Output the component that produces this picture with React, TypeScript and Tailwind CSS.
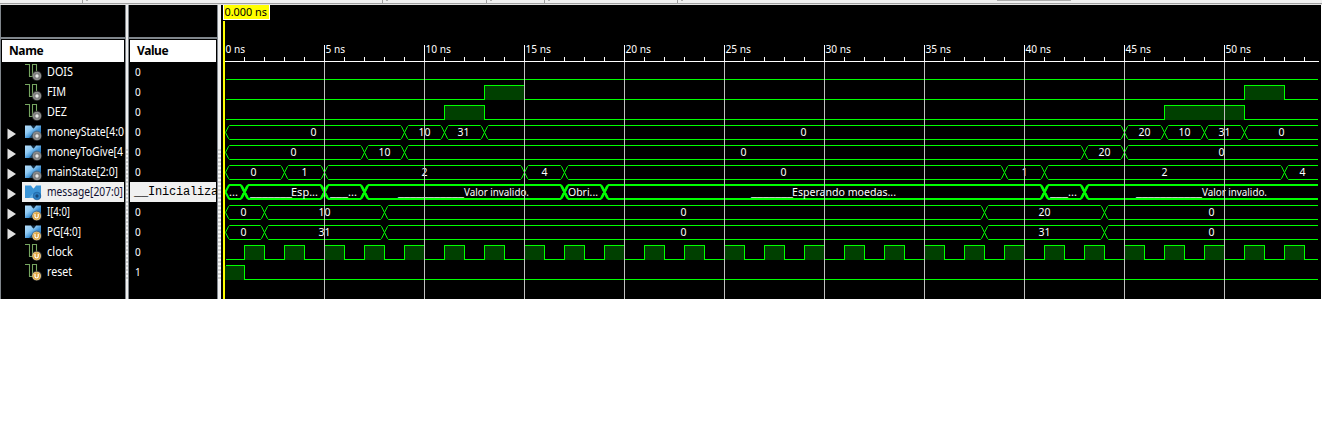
import React from "react";

const END = 1093.5;
const UI = '"Noto Sans", sans-serif';

type Kind = "bit" | "bus";
type Badge = "plus" | "unit";
interface Signal {
  name: string;
  value: string;
  kind: Kind;
  badge: Badge;
  selected?: boolean;
  nameWidth: number;
}

const signals: Signal[] = [
  { name: "DOIS", value: "0", kind: "bit", badge: "plus", nameWidth: 26 },
  { name: "FIM", value: "0", kind: "bit", badge: "plus", nameWidth: 19 },
  { name: "DEZ", value: "0", kind: "bit", badge: "plus", nameWidth: 20 },
  { name: "moneyState[4:0", value: "0", kind: "bus", badge: "plus", nameWidth: 77 },
  { name: "moneyToGive[4", value: "0", kind: "bus", badge: "plus", nameWidth: 76 },
  { name: "mainState[2:0]", value: "0", kind: "bus", badge: "plus", nameWidth: 71 },
  { name: "message[207:0]", value: "__Inicializa", kind: "bus", badge: "plus", selected: true, nameWidth: 76 },
  { name: "I[4:0]", value: "0", kind: "bus", badge: "unit", nameWidth: 23 },
  { name: "PG[4:0]", value: "0", kind: "bus", badge: "unit", nameWidth: 34 },
  { name: "clock", value: "0", kind: "bit", badge: "unit", nameWidth: 26 },
  { name: "reset", value: "1", kind: "bit", badge: "unit", nameWidth: 25 },
];

function IconDefs() {
  return (
    <defs>
      <linearGradient id="busFill" x1="0" y1="0" x2="1" y2="1">
        <stop offset="0" stopColor="#b4dcf8" />
        <stop offset="0.35" stopColor="#8fcaf4" />
        <stop offset="0.6" stopColor="#3a8fd4" />
        <stop offset="1" stopColor="#1c65ac" />
      </linearGradient>
      <radialGradient id="plusFill">
        <stop offset="0" stopColor="#9a9a9a" />
        <stop offset="0.7" stopColor="#808080" />
        <stop offset="1" stopColor="#5a5a5a" />
      </radialGradient>
      <radialGradient id="halo">
        <stop offset="0.6" stopColor="#6a6a6a" />
        <stop offset="1" stopColor="#3a3a3a" stopOpacity="0" />
      </radialGradient>
    </defs>
  );
}

function SignalIcon({ kind, badge, selected }: { kind: Kind; badge: Badge; selected?: boolean }) {
  return (
    <svg width="18" height="18" viewBox="0 0 18 18" className="block shrink-0">
      <IconDefs />
      {kind === "bit" ? (
        <path d="M1 1.5H5.5V13.5H8.5V1.5H12.5V8" fill="none" stroke="#76a560" strokeWidth="1.1" />
      ) : (
        <>
          <path d="M1 2.5H7L9.5 5.5L12 2.5H17V15H1Z" fill={selected ? "#3b94d6" : "url(#busFill)"} />
          <path d="M1 15H5L9 10.5L11 15Z" fill={selected ? "#6db3e6" : "#16344f"} opacity="0.7" />
          <path d="M7 2.5L9.5 5.5L12 2.5Z" fill={selected ? "#f0f0f0" : "#10283c"} />
        </>
      )}
      {!selected && <circle cx="12.8" cy="12.8" r="5.8" fill="url(#halo)" />}
      {badge === "plus" ? (
        <>
          <circle
            cx="13"
            cy="13"
            r="3.8"
            fill={selected ? "#2d7fc2" : "url(#plusFill)"}
            stroke={selected ? "#1c609d" : "#aaa"}
            strokeWidth="0.7"
          />
          <path d="M11.3 13H14.7M13 11.3V14.7" stroke={selected ? "#103a66" : "#fff"} strokeWidth="1.1" />
        </>
      ) : (
        <>
          <circle cx="12.6" cy="13" r="4" fill="#dfa23a" stroke="#f2d698" strokeWidth="0.7" />
          <path d="M11 10.8V13.6Q11 15 12.6 15Q14.2 15 14.2 13.6V10.8" fill="none" stroke="#fff" strokeWidth="1.2" />
        </>
      )}
    </svg>
  );
}

function NameRow({ s }: { s: Signal }) {
  return (
    <div className="flex h-5 items-center">
      <div className="flex h-5 w-[20px] shrink-0 items-center pl-[5px]">
        {s.kind === "bus" && (
          <svg width="11" height="12" viewBox="0 0 11 12" className="mt-[3px]">
            <path d="M0.5 0.5L9 6L0.5 11.5Z" fill="#e0e0e0" />
          </svg>
        )}
      </div>
      <div
        className={
          s.selected
            ? "flex h-5 grow items-center bg-[#f0f0f0] pl-[2px] text-[#101030]"
            : "flex h-5 grow items-center pl-[2px] text-white"
        }
      >
        <SignalIcon kind={s.kind} badge={s.badge} selected={s.selected} />
        <svg width="79" height="20" className="ml-[3px] block shrink-0">
          <text x="2" y="14" fontSize="12" fontFamily={UI} fill="currentColor" textLength={s.nameWidth} lengthAdjust="spacingAndGlyphs">
            {s.name}
          </text>
        </svg>
      </div>
    </div>
  );
}

function ValueRow({ s }: { s: Signal }) {
  return s.selected ? (
    <div className="h-5 overflow-hidden bg-[#f0f0f0] pl-1 font-['Liberation_Mono',monospace] text-[12px] leading-[21px] tracking-[-0.2px] whitespace-pre text-black">
      {s.value}
    </div>
  ) : (
    <div className="h-5 pl-[5px] font-['Noto_Sans',sans-serif] text-[10px] leading-[21px] text-white">{s.value}</div>
  );
}

function Column({ title, className, children }: { title: string; className: string; children: React.ReactNode }) {
  return (
    <div className={"flex shrink-0 flex-col overflow-hidden border-x border-[#80868c] bg-black " + className}>
      <div className="h-[32px] shrink-0 bg-black" />
      <div className="h-[2px] shrink-0 bg-[#80868c]" />
      <div className="mx-[1px] mt-[1px] flex h-[22px] shrink-0 items-center bg-white pl-[7px] font-['Noto_Sans',sans-serif] text-[12px] font-bold tracking-[-0.4px] text-black">
        {title}
      </div>
      <div className="mx-[1px] flex flex-col">{children}</div>
    </div>
  );
}

function Splitter({ className }: { className: string }) {
  return (
    <div className={"shrink-0 bg-[#f0f0f0] pt-[144px] " + className}>
      <div className="h-[132px] w-full bg-[repeating-linear-gradient(to_bottom,#d0d0d0_0px,#d0d0d0_2px,#f8f8f8_2px,#f8f8f8_4px)]" />
    </div>
  );
}

type Label = { x: number; w: number; text: string };
interface Bus {
  y: number;
  edges: number[];
  labels: Label[];
  bold?: boolean;
}

const num = (x: number, text: string): Label => ({ x: x - 223.6, w: text.length * 6, text });
const msg = (x: number, w: number, text: string): Label => ({ x: x - 224, w, text });

const buses: Bus[] = [
  {
    y: 125,
    edges: [180, 220, 260, 900, 940, 980, 1020],
    labels: [num(310, "0"), num(418, "10"), num(457, "31"), num(800, "0"), num(1138, "20"), num(1178, "10"), num(1218, "31"), num(1278, "0")],
  },
  { y: 145, edges: [140, 180, 860, 900], labels: [num(290, "0"), num(378, "10"), num(740, "0"), num(1098, "20"), num(1218, "0")] },
  {
    y: 165,
    edges: [60, 100, 300, 340, 780, 820, 1060],
    labels: [num(250, "0"), num(301, "1"), num(421, "2"), num(541, "4"), num(780, "0"), num(1021, "1"), num(1161, "2"), num(1299, "4")],
  },
  {
    y: 185,
    bold: true,
    edges: [20, 100, 140, 340, 380, 820, 860],
    labels: [
      msg(229, 9, "..."),
      msg(291, 27, "Esp..."),
      msg(348, 9, "..."),
      msg(464, 65, "Valor invalido."),
      msg(568, 30, "Obri..."),
      msg(792, 104, "Esperando moedas..."),
      msg(1068, 9, "..."),
      msg(1202, 65, "Valor invalido."),
    ],
  },
  { y: 205, edges: [40, 160, 760, 880], labels: [num(240, "0"), num(318, "10"), num(680, "0"), num(1038, "20"), num(1208, "0")] },
  { y: 225, edges: [40, 160, 760, 880], labels: [num(240, "0"), num(318, "31"), num(680, "0"), num(1038, "31"), num(1208, "0")] },
];

const leads = [
  { x: 250, n: 7 },
  { x: 330, n: 3 },
  { x: 398, n: 11 },
  { x: 751, n: 7 },
  { x: 1050, n: 3 },
  { x: 1136, n: 11 },
];

const bits: { y: number; highs: number[][] }[] = [
  { y: 65, highs: [] },
  { y: 85, highs: [[260, 300], [1020, 1060]] },
  { y: 105, highs: [[220, 260], [940, 1020]] },
  { y: 245, highs: Array.from({ length: 27 }, (_, i) => [20 + i * 40, 40 + i * 40]) },
  { y: 265, highs: [[0, 20]] },
];

function busPath(edges: number[], top: number): string {
  const bot = top + 14;
  const mid = top + 7;
  let d = "";
  const all = [1, ...edges];
  all.forEach((e, i) => {
    const next = all[i + 1];
    const closeTop = next === undefined ? `H${END}` : `H${next - 4}L${next - 3} ${top + 1}L${next} ${mid}`;
    const closeBot = next === undefined ? `H${END}` : `H${next - 4}L${next - 3} ${bot - 1}L${next} ${mid}`;
    d += `M${e} ${mid}L${e + 3} ${top + 1}L${e + 4} ${top}${closeTop}`;
    d += `M${e} ${mid}L${e + 3} ${bot - 1}L${e + 4} ${bot}${closeBot}`;
  });
  return d;
}

function crossPath(edges: number[], top: number): string {
  return edges.map((e) => `M${e - 3} ${top + 1}L${e + 3} ${top + 13}M${e + 3} ${top + 1}L${e - 3} ${top + 13}`).join("");
}

function bitPath(highs: number[][], top: number): string {
  let d = `M1 ${top + 14}`;
  highs.forEach(([a, b]) => {
    d += a === 0 ? `M1 ${top}H${b}V${top + 14}` : `H${a}V${top}H${b}V${top + 14}`;
  });
  return d + `H${END}`;
}

function Waveforms() {
  return (
    <svg width="1100" height="294" viewBox="-3 5 1100 294" className="block shrink-0 bg-black" fontFamily={UI}>
      <g transform="translate(0.5 0.5)" shapeRendering="crispEdges">
        {bits.map((b) => (
          <g key={b.y}>
            {b.highs.map(([a, e]) => (
              <rect key={a} x={a} y={b.y} width={e - a} height={14.5} fill="#004000" />
            ))}
            <path d={bitPath(b.highs, b.y)} fill="none" stroke="#00ff00" />
          </g>
        ))}
      </g>
      {buses.map((b) => (
        <g key={b.y} transform={b.bold ? "translate(0.5 0)" : "translate(0.5 0.5)"} fill="none" stroke="#00ff00">
          <path d={busPath(b.edges, b.y)} strokeWidth={b.bold ? 2 : 1} />
          {b.bold && <path d={crossPath(b.edges, b.y)} strokeWidth={2.6} />}
        </g>
      ))}
      <g fontSize="11" fill="#fff">
        {leads.map((l) => (
          <text key={l.x} x={l.x - 224} y={196} textLength={l.n * 6} lengthAdjust="spacingAndGlyphs">
            {"_".repeat(l.n)}
          </text>
        ))}
        {buses.map((b) =>
          b.labels.map((l) => (
            <text key={b.y + "-" + l.x} x={l.x} y={b.y + 11} textLength={l.w} lengthAdjust="spacingAndGlyphs">
              {l.text}
            </text>
          )),
        )}
      </g>
      <g shapeRendering="crispEdges">
        {Array.from({ length: 10 }, (_, i) => (
          <rect key={i} x={100 + i * 100} y={62} width={1} height={237} fill="#c0c0c0" />
        ))}
        <rect x={1} y={61} width={1094} height={1} fill="#fff" />
        {Array.from({ length: 54 }, (_, i) => {
          const major = (i + 1) % 5 === 0;
          return <rect key={i} x={(i + 1) * 20} y={major ? 45 : 57} width={1} height={major ? 17 : 4} fill="#fff" />;
        })}
        <rect x={-1} y={21} width={2} height={278} fill="#ffff00" />
      </g>
      <g fontSize="11" fill="#fff">
        {Array.from({ length: 11 }, (_, i) => (
          <text key={i} x={i * 100 + 1.5} y={53} textLength={i < 2 ? 19.5 : 25.5} lengthAdjust="spacingAndGlyphs">
            {`${i * 5} ns`}
          </text>
        ))}
      </g>
      <rect x={-1} y={5} width={47} height={15} fill="#fff" />
      <rect x={0} y={5} width={45} height={14} fill="#ffff00" />
      <text x={0.5} y={16} fontSize="11" fill="#000" textLength={42.5} lengthAdjust="spacingAndGlyphs">
        0.000 ns
      </text>
    </svg>
  );
}

export default function App() {
  return (
    <div className="flex h-[422px] w-[1322px] flex-col overflow-hidden bg-white">
      <div className="flex h-[5px] shrink-0 flex-col bg-[#f0f0f0]">
        <svg width="1322" height="3" className="block">
          {[82, 335, 422, 471, 583].map((x, i) => {
            const left = [82, 382, 486, 544, 677][i] ?? x;
            return (
              <g key={left}>
                <rect x={left} width="1" height="3" fill="#a0a0a0" />
                <rect x={left + 4} width="2" height="1" fill="#b0b0b0" />
              </g>
            );
          })}
          <rect x="997" width="74" height="1" fill="#adadad" />
        </svg>
        <div className="h-px bg-[#a0a0a0]" />
        <div className="h-px bg-[#e3e3e3]" />
      </div>
      <div className="flex h-[294px] shrink-0">
        <Column title="Name" className="w-[126px]">
          {signals.map((s) => (
            <NameRow key={s.name} s={s} />
          ))}
        </Column>
        <Splitter className="w-[2px]" />
        <Column title="Value" className="w-[90px]">
          {signals.map((s) => (
            <ValueRow key={s.name} s={s} />
          ))}
        </Column>
        <Splitter className="w-[3px]" />
        <Waveforms />
      </div>
    </div>
  );
}
